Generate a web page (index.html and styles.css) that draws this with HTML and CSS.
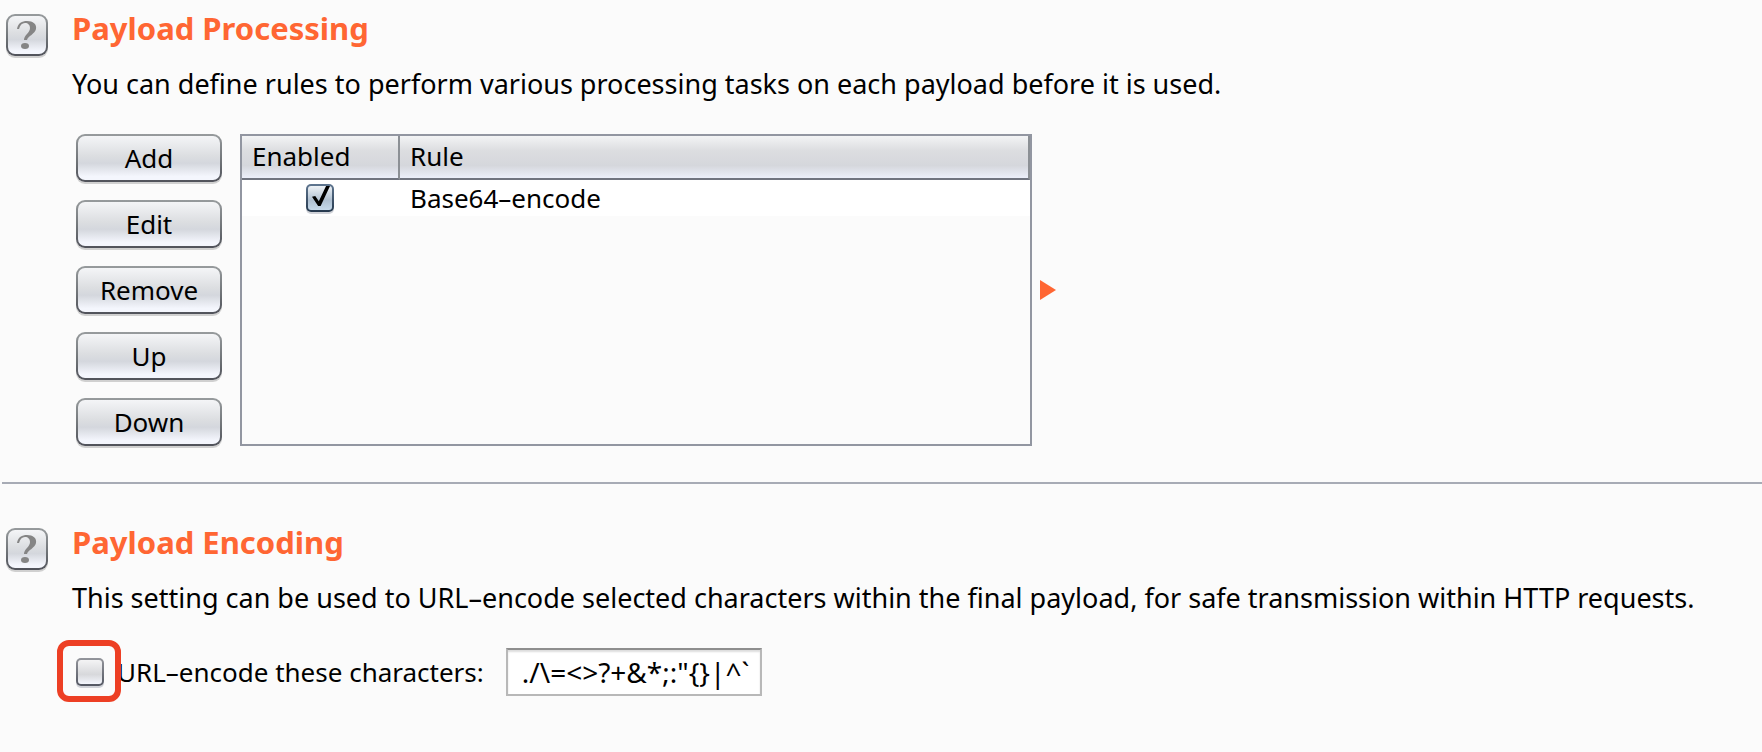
FILE: index.html
```html
<!DOCTYPE html>
<html lang="en">
<head>
<meta charset="utf-8">
<title>Payload options</title>
<link rel="stylesheet" href="styles.css">
</head>
<body>
<main>
  <section class="section">
    <button class="help" type="button" aria-label="Help: Payload Processing">
      <svg class="help-icon" viewBox="0 0 20 30" aria-hidden="true">
        <path d="M0 9C1 3 5 1 10 1c6 0 10 3 9 8-1 5-8 7-9 11H7c0-5 6-7 6-12 0-3-2-5-5-5-3 0-5 2-6 6Z"/>
        <ellipse cx="8" cy="26" rx="4" ry="3"/>
      </svg>
    </button>
    <div class="content">
      <h2 class="title">Payload Processing</h2>
      <p class="desc">You can define rules to perform various processing tasks on each payload before it is used.</p>
      <div class="rules">
        <div class="actions">
          <button class="btn" type="button">Add</button>
          <button class="btn" type="button">Edit</button>
          <button class="btn" type="button">Remove</button>
          <button class="btn" type="button">Up</button>
          <button class="btn" type="button">Down</button>
        </div>
        <div class="table-frame">
          <table class="table">
            <thead>
              <tr><th class="col-enabled" scope="col">Enabled</th><th scope="col">Rule</th></tr>
            </thead>
            <tbody>
              <tr>
                <td class="cell-check"><input class="check" type="checkbox" checked aria-labelledby="rule-1"></td>
                <td id="rule-1">Base64–encode</td>
              </tr>
            </tbody>
          </table>
        </div>
        <svg class="arrow" viewBox="0 0 16 20" aria-hidden="true"><path d="M0 0L16 10L0 20Z"/></svg>
      </div>
    </div>
  </section>
  <hr class="divider">
  <section class="section">
    <button class="help" type="button" aria-label="Help: Payload Encoding">
      <svg class="help-icon" viewBox="0 0 20 30" aria-hidden="true">
        <path d="M0 9C1 3 5 1 10 1c6 0 10 3 9 8-1 5-8 7-9 11H7c0-5 6-7 6-12 0-3-2-5-5-5-3 0-5 2-6 6Z"/>
        <ellipse cx="8" cy="26" rx="4" ry="3"/>
      </svg>
    </button>
    <div class="content">
      <h2 class="title">Payload Encoding</h2>
      <p class="desc">This setting can be used to URL–encode selected characters within the final payload, for safe transmission within HTTP requests.</p>
      <div class="encode">
        <span class="marked"><input class="check" type="checkbox" id="url-encode"></span>
        <label class="encode-label" for="url-encode">URL–encode these characters:</label>
        <input class="chars" type="text" aria-label="Characters to encode" value="./\=&lt;&gt;?+&amp;*;:&quot;{}|^`">
      </div>
    </div>
  </section>
</main>
</body>
</html>
```
FILE: styles.css
```css
* { box-sizing: border-box; }

body {
  margin: 0;
  background: #fbfbfb;
  color: #000;
  font-family: "Noto Sans", "Open Sans", sans-serif;
  font-size: 26px;
  line-height: 36px;
}

button, input { font: inherit; color: inherit; }

.section {
  display: flex;
  align-items: flex-start;
  gap: 24px;
  padding: 10px 6px 36px;
}

.help, .btn {
  border: 2px solid transparent;
  border-radius: 9px;
  background:
    linear-gradient(#f4f5f7, #dcdee1 45%, #d4d7dd 62%, #f4f6fd 92%) padding-box,
    linear-gradient(#979b9d, #6d7175 60%, #50525a) border-box;
  box-shadow: 0 2px 0 #d0d0d0;
  padding: 0;
}

.help {
  flex: none;
  display: grid;
  place-items: center;
  width: 42px;
  height: 42px;
  margin-top: 4px;
}

.help-icon { width: 20px; height: 30px; fill: #858585; }

.content { flex: 1; min-width: 0; }

.title {
  margin: 0;
  color: #ff6633;
  font-size: 31px;
  line-height: 36px;
  font-weight: 700;
}

.desc {
  margin: 20px 0 0;
  font-size: 27px;
}

.rules {
  display: flex;
  padding: 32px 0 0 4px;
}

.actions {
  display: flex;
  flex-direction: column;
  gap: 18px;
  width: 146px;
  margin-right: 18px;
}

.btn { height: 48px; }

.table-frame {
  flex: 0 1 792px;
  border: 2px solid #9296a1;
}

.table {
  width: 100%;
  border-collapse: separate;
  border-spacing: 0;
  table-layout: fixed;
}

.table th {
  height: 44px;
  padding: 3px 10px 0;
  line-height: 34px;
  vertical-align: top;
  text-align: left;
  font-weight: 400;
  background: linear-gradient(#f3f4f5, #dcdde0 35%, #d5d7dc 70%, #eceffa);
  border-right: 2px solid #8c9095;
  border-bottom: 2px solid #70747f;
}

.table .col-enabled { width: 158px; }

.table td {
  height: 36px;
  padding: 0 10px;
  background: #fff;
}

.table .cell-check { padding: 0 2px 0 0; }

.check {
  appearance: none;
  display: block;
  width: 28px;
  height: 28px;
  margin: 0;
  border: 2px solid transparent;
  border-radius: 5px;
  background:
    linear-gradient(#f4f4f5, #d7d8db 60%, #f4f6fd) padding-box,
    linear-gradient(#94969c, #535762) border-box;
  box-shadow: 0 2px 0 #d0d2d8;
}

.check:checked {
  margin: 0 auto;
  background:
    linear-gradient(#eef2f6, #afc0d1 60%, #c6daeb) padding-box,
    linear-gradient(#5f7690, #26394e) border-box;
}

.check:checked::before {
  content: "";
  display: block;
  width: 18px;
  height: 20px;
  margin-left: 4px;
  background: #000;
  clip-path: polygon(0 54%, 18% 50%, 38% 76%, 78% 0, 100% 0, 48% 100%, 34% 100%);
}

.arrow {
  flex: none;
  align-self: center;
  width: 16px;
  height: 20px;
  margin-left: 8px;
  fill: #ff6633;
}

.divider {
  margin: 0 0 30px 2px;
  border: 0;
  border-top: 2px solid #a7abb5;
}

.encode {
  display: flex;
  align-items: center;
  padding: 32px 0 0 4px;
}

.marked { position: relative; }

.marked::after {
  content: "";
  position: absolute;
  inset: -18px -17px -16px -19px;
  border: 6px solid #ed3f24;
  border-radius: 12px;
  pointer-events: none;
}

.encode-label { margin: 0 22px 0 13px; }

.chars {
  width: 256px;
  height: 48px;
  padding: 0 6px 0 14px;
  border: 2px solid #b8b8b8;
  border-top-color: #8e8e8e;
  border-radius: 0;
  background: #fff;
  box-shadow: inset 0 2px 2px #ddd;
  font-size: 28px;
}
```
